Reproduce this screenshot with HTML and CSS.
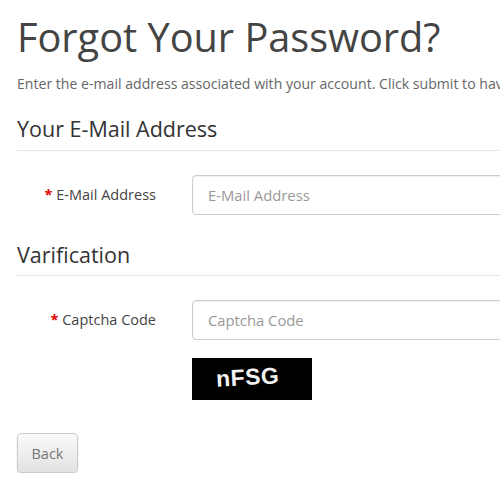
FILE: index.html
```html
<!DOCTYPE html>
<html lang="en">
<head>
<meta charset="utf-8">
<title>Forgot Your Password?</title>
<link rel="stylesheet" href="styles.css">
</head>
<body>
<div class="page">
  <h1 class="title">Forgot Your Password?</h1>
  <p class="intro">Enter the e-mail address associated with your account. Click submit to have a password reset link e-mailed to you.</p>

  <fieldset class="section">
    <legend class="section-title">Your E-Mail Address</legend>
    <div class="row">
      <label class="label" for="email"><span class="req">*</span> E-Mail Address</label>
      <input class="field" id="email" type="text" placeholder="E-Mail Address">
    </div>
  </fieldset>

  <fieldset class="section">
    <legend class="section-title">Varification</legend>
    <div class="row">
      <label class="label" for="captcha"><span class="req">*</span> Captcha Code</label>
      <input class="field" id="captcha" type="text" placeholder="Captcha Code">
    </div>
    <div class="captcha-row">
      <div class="captcha"><span class="captcha-text">nFSG</span></div>
    </div>
  </fieldset>

  <div class="buttons">
    <button class="btn" type="button">Back</button>
  </div>
</div>
</body>
</html>
```
FILE: styles.css
```css
html, body {
  margin: 0;
  padding: 0;
  background: #fff;
  overflow: hidden;
}

body {
  font-family: "Open Sans", "Liberation Sans", sans-serif;
  color: #444;
}

.page {
  padding-left: 17px;
  width: 800px;
}

.title {
  margin: 0;
  padding-top: 15px;
  font-size: 39.7px;
  line-height: 44px;
  font-weight: 400;
  color: #444;
}

.intro {
  margin: 15px 0 0;
  font-size: 14.1px;
  line-height: 20px;
  color: #666;
  white-space: nowrap;
}

.section {
  border: 0;
  margin: 0;
  padding: 0;
  min-width: 0;
}

.section-title {
  display: block;
  width: 100%;
  padding: 0 0 6px;
  margin: 20px 0 0;
  font-size: 21.5px;
  line-height: 30px;
  font-weight: 400;
  color: #333;
  border-bottom: 1px solid #e5e5e5;
  float: left;
  box-sizing: border-box;
}

.section + .section .section-title {
  margin-top: 25px;
  padding-bottom: 5px;
}

.row {
  clear: both;
  display: grid;
  grid-template-columns: 175px 1fr;
  padding-top: 24px;
}

.label {
  text-align: right;
  padding-right: 36px;
  font-size: 14.5px;
  line-height: 40px;
  color: #444;
}

.req {
  color: #d00;
  font-weight: 700;
}

.field {
  box-sizing: border-box;
  height: 40px;
  width: 520px;
  margin: 0;
  padding: 0 15px;
  border: 1px solid #ccc;
  border-radius: 4px;
  font-family: "Open Sans", "Liberation Sans", sans-serif;
  font-size: 14.8px;
  color: #555;
  box-shadow: inset 0 1px 1px rgba(0, 0, 0, 0.06);
}

.field::placeholder {
  color: #999;
}

.captcha-row {
  padding: 18px 0 0 175px;
}

.captcha {
  width: 120px;
  height: 42px;
  background: #000;
  display: flex;
  align-items: center;
}

.captcha-text {
  display: inline-block;
  margin-left: 24px;
  margin-top: -4px;
  font-family: "Liberation Sans", Arial, sans-serif;
  font-weight: 700;
  font-size: 23px;
  letter-spacing: 0.5px;
  color: #f2f2f2;
  transform: rotate(-3deg);
}

.buttons {
  padding-top: 33px;
}

.btn {
  box-sizing: border-box;
  width: 61px;
  height: 40px;
  margin: 0;
  padding: 0;
  font-family: "Open Sans", "Liberation Sans", sans-serif;
  font-size: 14.5px;
  color: #777;
  background: linear-gradient(#fafafa, #e2e2e2);
  border: 1px solid #ccc;
  border-radius: 4px;
  box-shadow: 0 1px 2px rgba(0, 0, 0, 0.12);
}
```
